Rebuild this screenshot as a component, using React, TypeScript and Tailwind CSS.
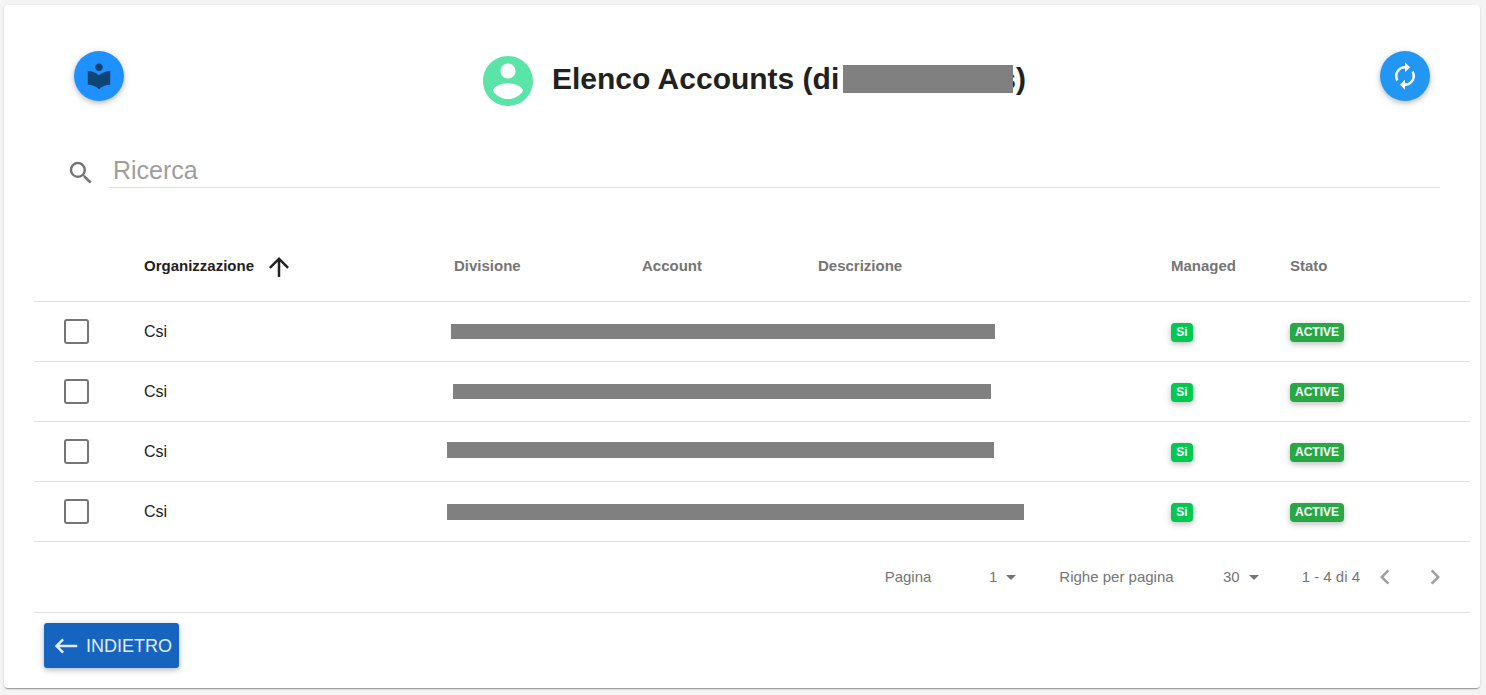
import { useState } from "react";
import {
  MdArrowDropDown, MdArrowUpward, MdAutorenew, MdChevronLeft, MdChevronRight,
  MdKeyboardBackspace, MdLocalLibrary, MdSearch,
} from "react-icons/md";

const accounts = [
  { id: 1, organizzazione: "Csi", mask: "ml-1 w-[544px] h-[15px]", managed: "Si", stato: "ACTIVE" },
  { id: 2, organizzazione: "Csi", mask: "ml-1.5 w-[538px] h-[15px]", managed: "Si", stato: "ACTIVE" },
  { id: 3, organizzazione: "Csi", mask: "mb-1 w-[547px] h-4", managed: "Si", stato: "ACTIVE" },
  { id: 4, organizzazione: "Csi", mask: "w-[577px] h-4", managed: "Si", stato: "ACTIVE" },
];

const columns = ["Divisione", "Account", "Descrizione", "Managed", "Stato"];

const fabShadow = "shadow-[0_2px_5px_0_rgba(0,0,0,0.2),0_2px_10px_0_rgba(0,0,0,0.1)]";
const badge = "inline-block min-w-[22px] rounded px-[5px] text-center text-xs leading-[19px] font-bold text-white align-middle shadow-[0_2px_5px_0_rgba(0,0,0,0.16),0_2px_10px_0_rgba(0,0,0,0.12)]";

function AccountIcon() {
  return (
    <svg viewBox="0 0 24 24" className="size-[60px] shrink-0 fill-[#5ae4a8]" aria-hidden="true">
      <path d="M12 2C6.48 2 2 6.48 2 12s4.48 10 10 10 10-4.48 10-10S17.52 2 12 2zm0 3c1.66 0 3 1.34 3 3s-1.34 3-3 3-3-1.34-3-3 1.34-3 3-3zm0 14.2c-2.5 0-4.71-1.28-6-3.22.03-1.99 4-3.08 6-3.08 1.99 0 5.97 1.09 6 3.08-1.29 1.94-3.5 3.22-6 3.22z" />
    </svg>
  );
}

function PageSelect({ id, label, options }: { id: string; label: string; options: number[] }) {
  return (
    <div className="flex items-center">
      <label htmlFor={id}>{label}</label>
      <div className="relative">
        <select id={id} className="h-8 w-[92px] cursor-pointer appearance-none bg-transparent pr-[26px] outline-none [text-align-last:right]">
          {options.map((o) => <option key={o}>{o}</option>)}
        </select>
        <MdArrowDropDown className="pointer-events-none absolute top-1 right-0 size-6" />
      </div>
    </div>
  );
}

export default function App() {
  const [search, setSearch] = useState("");
  const [selected, setSelected] = useState<number[]>([]);

  const toggle = (id: number) =>
    setSelected((s) => (s.includes(id) ? s.filter((x) => x !== id) : [...s, id]));

  return (
    <div className="min-h-screen bg-[#f4f4f4] pt-[5px] pr-1.5 pb-[7px] pl-1 font-['Liberation_Sans',Arial,sans-serif]">
      <main className="rounded bg-white pt-[46px] pr-2.5 pb-5 pl-[30px] shadow-[0_2px_1px_-1px_rgba(0,0,0,0.2),0_1px_1px_0_rgba(0,0,0,0.14),0_1px_3px_0_rgba(0,0,0,0.12)]">
        {/* Header */}
        <header className="flex items-start justify-between px-10">
          <button aria-label="Guida" className={`flex size-[50px] items-center justify-center rounded-full bg-[#1e90ff] text-[#0f4477] ${fabShadow}`}>
            <MdLocalLibrary className="size-[30px]" />
          </button>
          <div className="flex gap-3.5">
            <AccountIcon />
            <h1 className="flex h-14 items-center text-3xl font-bold whitespace-nowrap text-[#212121]">
              Elenco Accounts (di
              <span className="z-10 ml-1 -mr-3.5 h-7 w-[170px] bg-[#808080]" />
              s)
            </h1>
          </div>
          <button aria-label="Aggiorna" className={`flex size-[50px] items-center justify-center rounded-full bg-[#2196f3] text-white ${fabShadow}`}>
            <MdAutorenew className="size-[30px]" />
          </button>
        </header>

        {/* Ricerca */}
        <div className="mt-[41px] flex items-end gap-[13px] pr-[30px] pl-8">
          <label htmlFor="ricerca" aria-label="Ricerca">
            <MdSearch className="size-[30px] text-[#757575]" />
          </label>
          <input id="ricerca" value={search} onChange={(e) => setSearch(e.target.value)} placeholder="Ricerca"
            className="h-9 min-w-0 flex-1 border-b border-[#e0e0e0] pt-0.5 pl-1 text-[25px] text-[#212121] outline-none placeholder:text-[#9e9e9e]" />
        </div>

        {/* Tabella */}
        <table className="mt-11 w-full table-fixed border-separate border-spacing-0 text-left text-[#212121]">
          <colgroup>
            <col className="w-[103px]" />
            <col className="w-[310px]" />
            <col className="w-[188px]" />
            <col className="w-[176px]" />
            <col />
            <col className="w-[119px]" />
            <col className="w-[187px]" />
          </colgroup>
          <thead>
            <tr className="h-[70px] text-[15px] text-[#757575] *:border-b *:border-[#e0e0e0] *:pl-[7px]">
              <td />
              <th className="text-[#212121]">
                <button className="flex items-center gap-2.5 font-bold">
                  Organizzazione
                  <MdArrowUpward className="size-[30px]" />
                </button>
              </th>
              {columns.map((c) => <th key={c}>{c}</th>)}
            </tr>
          </thead>
          <tbody>
            {accounts.map((a) => (
              <tr key={a.id} className="h-[60px] *:border-b *:border-[#e0e0e0]">
                <td className="pl-[30px]">
                  <input type="checkbox" aria-label={`Seleziona ${a.organizzazione} ${a.id}`}
                    checked={selected.includes(a.id)} onChange={() => toggle(a.id)}
                    className="block size-[25px] appearance-none rounded-[3px] border-2 border-[#757575] checked:bg-[#757575]" />
                </td>
                <td className="pl-[7px]">{a.organizzazione}</td>
                <td colSpan={3}><div className={`bg-[#808080] ${a.mask}`} /></td>
                <td className="pl-[7px]"><span className={`bg-[#00c851] ${badge}`}>{a.managed}</span></td>
                <td className="pl-[7px]"><span className={`bg-[#28a745] ${badge}`}>{a.stato}</span></td>
              </tr>
            ))}
          </tbody>
        </table>

        {/* Paginazione */}
        <div className="flex h-[71px] items-center justify-end border-b border-[#e0e0e0] pr-2.5 text-[15px] text-[#757575]">
          <div className="flex items-center gap-9">
            <PageSelect id="pagina" label="Pagina" options={[1]} />
            <PageSelect id="righe" label="Righe per pagina" options={[30, 50, 100]} />
            <span>1 - 4 di 4</span>
          </div>
          <button aria-label="Pagina precedente" className="flex size-[50px] items-center justify-center text-[#9e9e9e]">
            <MdChevronLeft className="size-[30px]" />
          </button>
          <button aria-label="Pagina successiva" className="flex size-[50px] items-center justify-center text-[#9e9e9e]">
            <MdChevronRight className="size-[30px]" />
          </button>
        </div>

        <button className="mt-2.5 ml-2.5 flex h-[45px] items-center gap-[5px] rounded-[3px] bg-[#1565c0] px-[7px] text-lg text-[#e3ebf6] shadow-[0_2px_5px_0_rgba(0,0,0,0.2),0_2px_10px_0_rgba(0,0,0,0.1)]">
          <MdKeyboardBackspace className="size-[30px]" />
          INDIETRO
        </button>
      </main>
    </div>
  );
}
